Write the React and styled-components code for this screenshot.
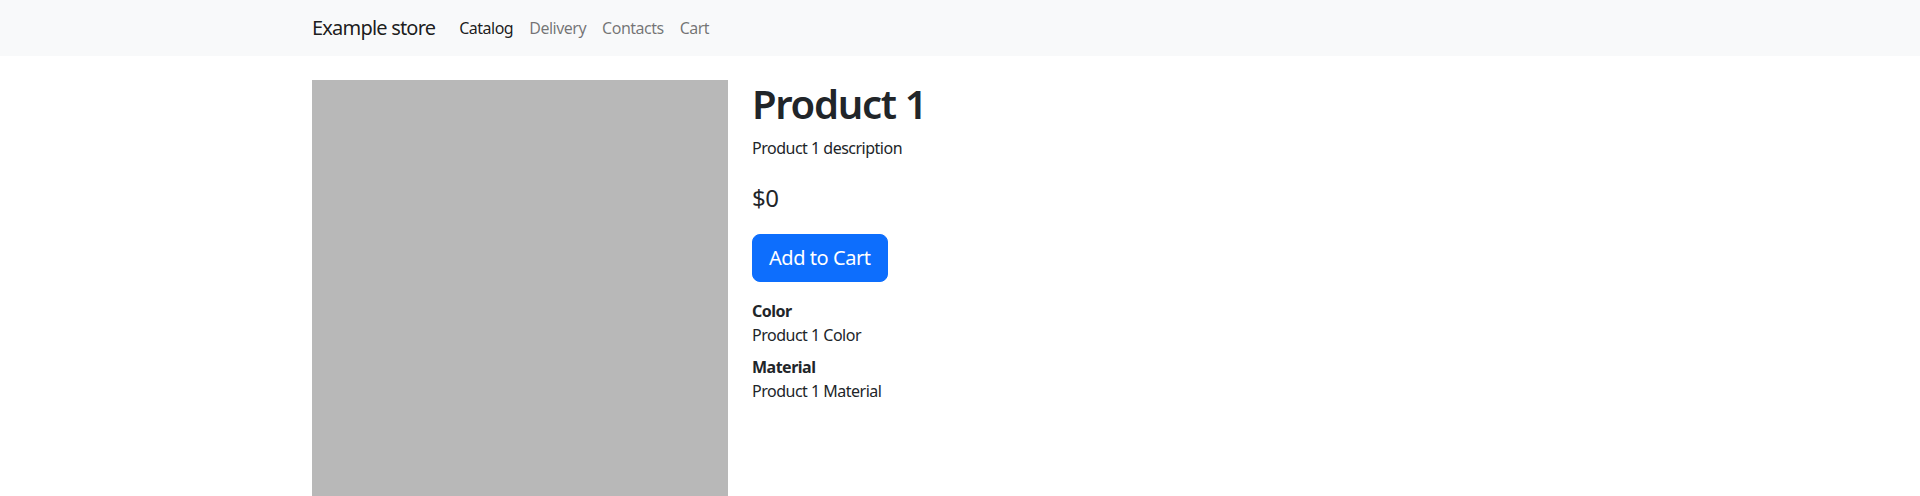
import styled, { createGlobalStyle } from "styled-components";

const GlobalStyle = createGlobalStyle`
  *, *::before, *::after {
    box-sizing: border-box;
  }

  body {
    margin: 0;
    font-family: "Segoe UI", "Noto Sans", "Liberation Sans", sans-serif;
    font-size: 16px;
    line-height: 1.5;
    color: #212529;
    background-color: #fff;
  }
`;

const Navbar = styled.nav`
  background-color: #f8f9fa;
  padding: 8px 0;
`;

const Container = styled.div`
  max-width: 1320px;
  margin: 0 auto;
  padding: 0 12px;
`;

const NavInner = styled(Container)`
  display: flex;
  align-items: center;
`;

const Brand = styled.a`
  font-size: 20px;
  line-height: 30px;
  padding: 5px 0;
  margin-right: 16px;
  color: rgba(0, 0, 0, 0.9);
  text-decoration: none;
  letter-spacing: -0.8px;
`;

const NavList = styled.ul`
  display: flex;
  list-style: none;
  margin: 0;
  padding: 0;
`;

const NavLink = styled.a`
  display: block;
  padding: 8px;
  font-size: 16px;
  line-height: 24px;
  text-decoration: none;
  letter-spacing: -0.5px;
  color: ${({ active }) => (active ? "rgba(0, 0, 0, 0.9)" : "rgba(0, 0, 0, 0.55)")};
`;

const Main = styled(Container)`
  margin-top: 24px;
`;

const Row = styled.div`
  display: grid;
  grid-template-columns: 4fr 8fr;
  margin: 0 -12px;
`;

const Col = styled.div`
  padding: 0 12px;
`;

const ImagePlaceholder = styled.div`
  width: 100%;
  height: 416px;
  background-color: #b8b8b8;
`;

const Title = styled.h1`
  font-size: 40px;
  font-weight: 600;
  line-height: 1.2;
  margin: 0 0 8px;
  letter-spacing: -1.3px;
`;

const Description = styled.p`
  margin: 0 0 20px;
  letter-spacing: -0.5px;
`;

const Price = styled.p`
  font-size: 24px;
  margin: 0 0 18px;
  letter-spacing: -0.5px;
`;

const Button = styled.button`
  display: inline-block;
  font-family: inherit;
  font-size: 20px;
  line-height: 1.5;
  padding: 8px 16px;
  border: 1px solid #0d6efd;
  border-radius: 8px;
  background-color: #0d6efd;
  color: #fff;
  cursor: pointer;
  margin-bottom: 17px;
  letter-spacing: -0.45px;
`;

const Specs = styled.dl`
  margin: 0 0 16px;
`;

const SpecName = styled.dt`
  font-weight: 700;
  letter-spacing: -0.5px;
`;

const SpecValue = styled.dd`
  margin: 0 0 8px;
  letter-spacing: -0.5px;
`;

const links = [
  { label: "Catalog", active: true },
  { label: "Delivery" },
  { label: "Contacts" },
  { label: "Cart" },
];

const specs = [
  { name: "Color", value: "Product 1 Color" },
  { name: "Material", value: "Product 1 Material" },
];

const App = () => (
  <>
    <GlobalStyle />
    <Navbar>
      <NavInner>
        <Brand href="#">Example store</Brand>
        <NavList>
          {links.map(({ label, active }) => (
            <li key={label}>
              <NavLink href="#" active={active ? 1 : 0}>
                {label}
              </NavLink>
            </li>
          ))}
        </NavList>
      </NavInner>
    </Navbar>
    <Main>
      <Row>
        <Col>
          <ImagePlaceholder />
        </Col>
        <Col>
          <Title>Product 1</Title>
          <Description>Product 1 description</Description>
          <Price>$0</Price>
          <Button>Add to Cart</Button>
          <Specs>
            {specs.map(({ name, value }) => (
              <div key={name}>
                <SpecName>{name}</SpecName>
                <SpecValue>{value}</SpecValue>
              </div>
            ))}
          </Specs>
        </Col>
      </Row>
    </Main>
  </>
);

export default App;
